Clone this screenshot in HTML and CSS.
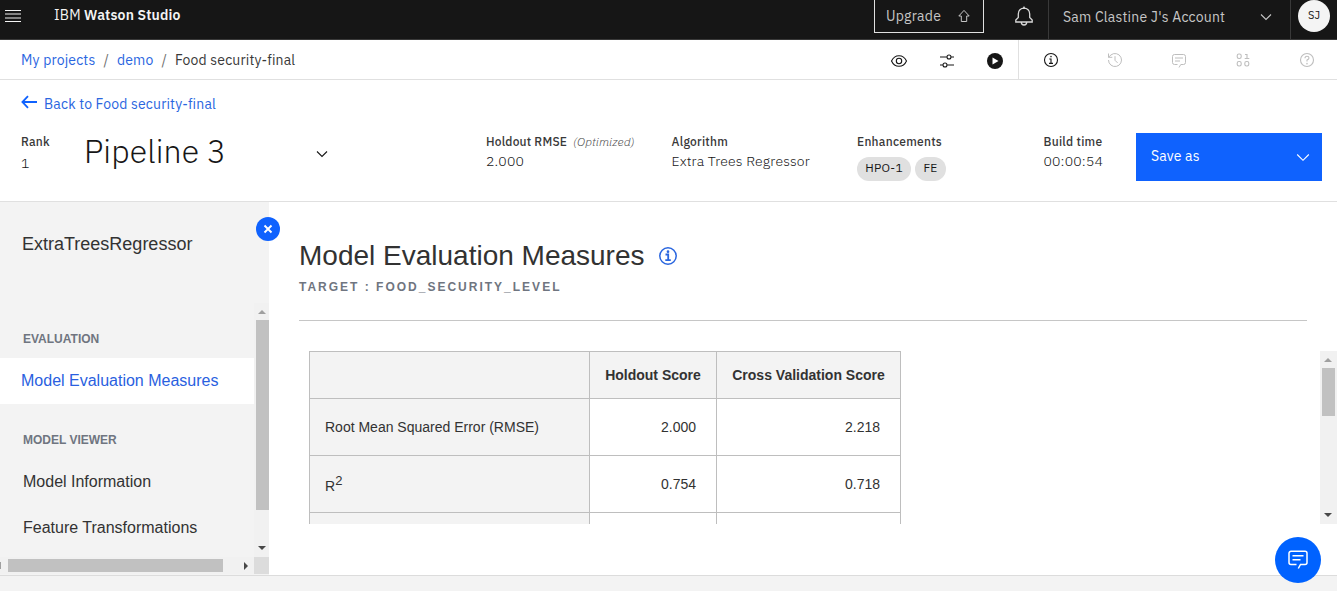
FILE: index.html
```
<!DOCTYPE html>
<html lang="en">
<head>
<meta charset="utf-8">
<title>IBM Watson Studio</title>
<link rel="stylesheet" href="styles.css">
</head>
<body>
<div class="app">
  <header class="topbar">
    <svg class="menu" width="16" height="12" viewBox="0 0 16 12" stroke="#f4f4f4" stroke-width="1"><path d="M0 .5h16M0 11.500h16"/><path d="M0 4h16M0 8h16" stroke="#a8a8a8" stroke-width="1.600"/></svg>
    <div class="brand"><span class="brand-ibm">IBM</span> <b>Watson Studio</b></div>
    <button class="upgrade"><span>Upgrade</span><svg width="14" height="14" viewBox="0 0 14 14" fill="none" stroke="#c6c6c6" stroke-width="1"><path d="M7 1.4 12.2 7H9.7v5.5H4.3V7H1.8z"/></svg></button>
    <svg class="bell" width="20" height="20" viewBox="0 0 20 20" fill="none" stroke="#d8d8d8" stroke-width="1.3"><path d="M10 .5v1.6M10 2.2c-3.300 0-5.700 2.400-5.700 5.700v3.600L1.800 14v2h16.400v-2l-2.500-2.500V7.900c0-3.300-2.400-5.700-5.700-5.700zM7.300 16.300a2.700 2.700 0 0 0 5.400 0"/></svg>
    <div class="account"><span>Sam Clastine J's Account</span><svg width="12" height="8" viewBox="0 0 12 8" fill="none" stroke="#c6c6c6" stroke-width="1.1"><path d="m1 1.500 5 5 5-5"/></svg></div>
    <div class="user"><span class="avatar">SJ</span></div>
  </header>

  <nav class="crumbs">
    <div class="trail"><a class="c-projects">My projects</a><i>/</i><a class="c-demo">demo</a><i>/</i><span>Food security-final</span></div>
    <div class="tools">
      <svg width="18" height="18" viewBox="0 0 18 18" fill="none" stroke="#161616" stroke-width="1.1"><path d="M1.500 9C3 5.700 5.800 3.700 9 3.700S15 5.700 16.500 9C15 12.300 12.200 14.300 9 14.300S3 12.300 1.500 9z"/><circle cx="9" cy="9" r="2.700"/></svg>
      <svg width="18" height="18" viewBox="0 0 18 18" fill="none" stroke="#161616" stroke-width="1.1"><path d="M2 5h6.800M13.200 5H16M2 13h2.800M9.200 13H16"/><circle cx="11" cy="5" r="2"/><circle cx="7" cy="13" r="2"/></svg>
      <svg width="18" height="18" viewBox="0 0 18 18"><circle cx="9" cy="9" r="8" fill="#161616"/><path d="M6.500 5.500v7l6-3.500z" fill="#fff"/></svg>
    </div>
    <div class="panels">
      <svg width="16" height="16" viewBox="0 0 16 16" fill="none" stroke="#161616" stroke-width="1.1"><circle cx="8" cy="8" r="6.500"/><path d="M6.300 7H8v4.300M6 11.400h4"/><circle cx="8" cy="4.500" r=".3"/></svg>
      <svg width="16" height="16" viewBox="0 0 16 16" fill="none" stroke="#bebebe" stroke-width="1"><path d="M1.500 8A6.500 6.500 0 1 0 4 2.900L1.500 5.300M1.500 1.500v3.800h3.800M8 4.200v4.100l2.600 2.600"/></svg>
      <svg width="16" height="16" viewBox="0 0 16 16" fill="none" stroke="#bebebe" stroke-width="1"><path d="M6.500 12.500h-3a2 2 0 0 1-2-2v-6a2 2 0 0 1 2-2h9a2 2 0 0 1 2 2v6a2 2 0 0 1-2 2H9.800l-1.800 3M4 6h8M4 9h5"/></svg>
      <svg width="16" height="16" viewBox="0 0 16 16" fill="none" stroke="#bebebe" stroke-width="1.100"><rect x="2.200" y="2" width="4" height="4.500" rx="1.700"/><rect x="2.200" y="9.500" width="4" height="4.500" rx="1.700"/><rect x="9.800" y="9.500" width="4" height="4.500" rx="1.700"/><path d="M10 2.500h2v4M9.700 6.500h4.600"/></svg>
      <svg width="16" height="16" viewBox="0 0 16 16" fill="none" stroke="#bebebe" stroke-width="1.100"><circle cx="8" cy="8" r="6.500"/><path d="M6 6.300c0-1.300.8-2 2-2s2 .7 2 1.800S9 7.700 8 8.100v1.400"/><circle cx="8" cy="11.600" r=".3"/></svg>
    </div>
  </nav>

  <section class="summary">
    <a class="back"><svg width="17" height="14" viewBox="0 0 17 14" fill="none" stroke="#0f62fe" stroke-width="1.800"><path d="M16 7H1.500M7 1.200 1.400 7 7 12.800"/></svg><span>Back to Food security-final</span></a>
    <div class="facts">
      <div class="fact rank"><b>Rank</b><span>1</span></div>
      <div class="pipeline"><h1>Pipeline 3</h1><svg width="12" height="8" viewBox="0 0 12 8" fill="none" stroke="#161616" stroke-width="1.100"><path d="m1 1.500 5 5 5-5"/></svg></div>
      <div class="fact holdout"><div class="label"><b>Holdout RMSE</b><em>(Optimized)</em></div><span>2.000</span></div>
      <div class="fact algorithm"><b>Algorithm</b><span>Extra Trees Regressor</span></div>
      <div class="fact enh"><b>Enhancements</b><div class="tags"><span class="tag hpo">HPO-1</span><span class="tag fe">FE</span></div></div>
      <div class="fact build"><b>Build time</b><span>00:00:54</span></div>
      <button class="save"><span>Save as</span><svg width="14" height="9" viewBox="0 0 14 9" fill="none" stroke="#fff" stroke-width="1.100"><path d="m1.200 1.500 5.800 5.800 5.800-5.800"/></svg></button>
    </div>
  </section>

  <main class="body">
    <aside class="side">
      <h2>ExtraTreesRegressor</h2>
      <div class="side-scroll">
        <div class="side-list">
          <h3>EVALUATION</h3>
          <a class="item active">Model Evaluation Measures</a>
          <h3 class="second">MODEL VIEWER</h3>
          <a class="item">Model Information</a>
          <a class="item">Feature Transformations</a>
        </div>
        <div class="vbar"><i class="up"></i><i class="thumb"></i><i class="down"></i></div>
      </div>
      <div class="hbar"><i class="left"></i><i class="hthumb"></i><i class="right"></i><i class="corner"></i></div>
      <button class="close"><svg width="10" height="10" viewBox="0 0 10 10" stroke="#fff" stroke-width="1.900"><path d="m1.500 1.500 7 7m0-7-7 7"/></svg></button>
    </aside>
    <section class="content">
      <div class="heading"><h1>Model Evaluation Measures</h1><svg width="18" height="18" viewBox="0 0 18 18" fill="none" stroke="#2a66df" stroke-width="1.500"><circle cx="9" cy="9" r="8.200"/><path d="M6.500 7.500h2.700V13M6.300 13.200h5.500" stroke-width="1.800"/><circle cx="9" cy="4.700" r=".6"/></svg></div>
      <p class="target">TARGET : FOOD_SECURITY_LEVEL</p>
      <div class="measures">
        <table>
          <tr class="head"><th></th><th>Holdout Score</th><th>Cross Validation Score</th></tr>
          <tr><td>Root Mean Squared Error (RMSE)</td><td>2.000</td><td>2.218</td></tr>
          <tr><td class="r2">R<sup>2</sup></td><td>0.754</td><td>0.718</td></tr>
          <tr><td></td><td></td><td></td></tr>
        </table>
        <div class="vbar wide"><i class="up"></i><i class="thumb"></i><i class="down"></i></div>
      </div>
    </section>
  </main>
  <footer class="foot"></footer>
  <button class="chat"><svg width="22" height="22" viewBox="0 0 22 22" fill="none" stroke="#fff" stroke-width="1.500"><path d="M9.500 15.500H4a2 2 0 0 1-2-2V4.300a2 2 0 0 1 2-2h14a2 2 0 0 1 2 2v9.200a2 2 0 0 1-2 2h-4.500l-2.200 4M5.500 6.700h11M5.500 10.700h8"/></svg></button>
</div>
</body>
</html>
```
FILE: styles.css
```
* { box-sizing: border-box; }
body { margin: 0; background: #fff; color: #161616; font-family: "IBM Plex Sans", Roboto, sans-serif; font-size: 14px; }
h1, h2, h3, p { margin: 0; font-weight: 400; }
button { border: 0; padding: 0; font: inherit; }
svg { display: block; flex: none; }
.app { position: relative; width: 1337px; height: 591px; overflow: hidden; display: flex; flex-direction: column; white-space: nowrap; }

.topbar { height: 40px; background: #161616; border-bottom: 1px solid #393939; display: flex; flex: none; color: #c6c6c6; }
.menu { margin: 10px 0 0 5px; }
.brand { width: 853px; flex: none; padding-left: 33px; line-height: 31px; color: #f4f4f4; }
.brand b { font-weight: 600; letter-spacing: .16px; }
.brand-ibm { letter-spacing: .2px; }
.upgrade { width: 110px; height: 33px; flex: none; border: 1px solid #e0e0e0; border-top: 0; background: #161616; color: #c6c6c6; display: flex; align-items: center; justify-content: space-between; padding: 0 12px 0 11px; letter-spacing: .25px; }
.bell { margin: 6px 14px 0 30px; }
.account { width: 242px; flex: none; border-left: 1px solid #393939; display: flex; align-items: center; justify-content: space-between; padding: 0 18px 6px 14px; letter-spacing: .2px; }
.user { border-left: 1px solid #393939; padding-left: 7px; }
.avatar { display: block; width: 32px; height: 32px; border-radius: 50%; background: #f4f4f4; color: #161616; font-size: 11px; line-height: 31px; text-align: center; }

.crumbs { height: 40px; border-bottom: 1px solid #e0e0e0; display: flex; flex: none; }
.trail { width: 890px; padding-left: 21px; line-height: 40px; letter-spacing: .16px; color: #393939; display: flex; }
.trail a, .back { color: #2a66df; }
.trail i { font-style: normal; width: 21.500px; text-align: center; color: #6f6f6f; }
.tools { width: 129px; border-right: 1px solid #e0e0e0; display: flex; gap: 30px; padding-top: 12px; }
.panels { display: flex; gap: 48px; padding: 12px 0 0 24px; }

.summary { height: 122px; border-bottom: 1px solid #e0e0e0; flex: none; }
.back { display: flex; gap: 6px; padding: 15px 0 0 21px; height: 53px; line-height: 19px; letter-spacing: .16px; }
.facts { display: flex; padding-left: 21px; }
.fact { display: flex; flex-direction: column; line-height: 18px; }
.fact b { font-size: 12px; font-weight: 500; color: #393939; line-height: 18px; letter-spacing: .27px; }
.label { display: flex; }
.fact .label b { letter-spacing: .2px; }
.fact em { font-size: 12px; font-weight: 300; margin-left: 6px; color: #525252; letter-spacing: .05px; }
.fact > span { margin-top: 1px; font-weight: 300; letter-spacing: .16px; }
.rank { width: 63px; }
.rank > span { margin-top: 3px; }
.pipeline { width: 402px; display: flex; }
.pipeline h1 { font-size: 32px; font-weight: 300; line-height: 36px; width: 232px; letter-spacing: .1px; }
.pipeline svg { margin-top: 17px; }
.holdout { width: 185.500px; }
.algorithm { width: 185.500px; }
.enh { width: 186.500px; }
.build { width: 92.500px; }
.tags { display: flex; gap: 4px; margin-top: 6px; }
.tag { height: 24px; border-radius: 12px; background: #e0e0e0; font-size: 12px; line-height: 22px; text-align: center; letter-spacing: .25px; }
.hpo { width: 54px; }
.fe { width: 31px; }
.save { width: 186px; height: 48px; background: #0f62fe; color: #fff; display: flex; align-items: center; justify-content: space-between; padding: 0 12px 0 15px; letter-spacing: .16px; }
.save span { padding-bottom: 2px; }

.body { height: 373px; display: flex; flex: none; font-family: "Liberation Sans", Arial, sans-serif; }
.side { position: relative; width: 269px; background: #f3f3f3; display: flex; flex-direction: column; }
.side h2 { font-size: 18px; color: #323232; height: 101px; padding: 32px 0 0 22px; line-height: 21px; }
.side-scroll { display: flex; height: 254px; }
.side-list { width: 254px; overflow: hidden; padding-top: 26px; }
.side h3 { font-size: 12px; font-weight: 700; color: #6f7580; line-height: 20px; padding-left: 23px; margin-bottom: 9px; }
.side .second { margin-top: 26px; }
.item { display: block; height: 46px; line-height: 45px; font-size: 16px; padding-left: 23px; color: #323232; }
.active { background: #fff; color: #2a5fe0; padding-left: 21px; }
.vbar { width: 15px; background: #f1f1f1; padding: 7px 0 7px 2px; display: flex; flex-direction: column; }
.vbar i, .hbar i { display: block; }
.up { border: 4px solid transparent; border-top: 0; border-bottom-color: #a0a0a0; margin: 0 auto 6px 2px; width: 0; }
.down { border: 4px solid transparent; border-bottom: 0; border-top-color: #484848; margin: auto auto 0 2px; width: 0; }
.thumb { width: 13px; height: 190px; background: #c1c1c1; }
.hbar { display: flex; height: 17px; align-items: center; background: #f1f1f1; }
.left { width: 1px; height: 7px; background: #a0a0a0; }
.hthumb { width: 215px; height: 13px; background: #c1c1c1; margin: 0 21px 0 7px; }
.right { border: 4px solid transparent; border-right: 0; border-left-color: #484848; }
.corner { width: 15px; height: 17px; background: #dcdcdc; margin-left: auto; }
.close { position: absolute; left: 256px; top: 15px; width: 24px; height: 24px; border-radius: 50%; background: #0f62fe; display: flex; align-items: center; justify-content: center; }

.content { width: 1068px; padding: 37px 0 0 30px; }
.heading { display: flex; gap: 14px; line-height: 34px; color: #323232; }
.heading h1 { font-size: 28px; }
.heading svg { margin-top: 8px; }
.target { font-size: 12px; font-weight: 700; letter-spacing: 2px; color: #6f7580; line-height: 16px; width: 1008px; height: 48px; padding-top: 6px; border-bottom: 1px solid #c6c6c6; }
.measures { height: 173px; margin-top: 30px; padding-left: 10px; overflow: hidden; display: flex; justify-content: space-between; align-items: flex-start; }
table { border-collapse: collapse; table-layout: fixed; width: 592px; color: #323232; font-size: 14px; }
th, td { border: 1px solid #bebebe; height: 57px; padding: 0 20px; text-align: right; }
th { height: 47px; background: #f3f3f3; padding: 0 15px; text-align: center; }
th:first-child { width: 280px; }
th:nth-child(2) { width: 127px; }
td:first-child { background: #f3f3f3; text-align: left; padding: 0 15px; }
td.r2:first-child { padding-top: 4px; }
sup { font-size: 13px; line-height: 0; }
.wide { width: 17px; height: 173px; flex: none; }
.wide .thumb { height: 48px; }
.foot { height: 16px; flex: none; background: #f3f3f3; border-top: 1px solid #dcdcdc; }
.chat { position: absolute; left: 1275px; top: 537px; width: 46px; height: 46px; border-radius: 50%; background: #0062ff; display: flex; align-items: center; justify-content: center; }
```
